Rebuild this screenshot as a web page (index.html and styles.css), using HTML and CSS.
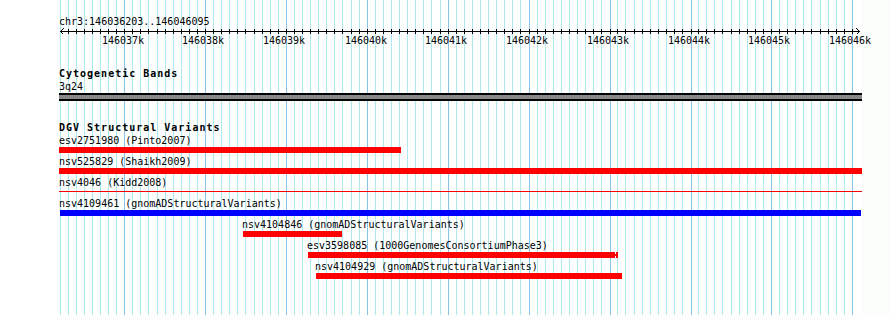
FILE: index.html
```html
<!DOCTYPE html>
<html lang="en">
<head>
<meta charset="utf-8">
<title>Genome view</title>
<link rel="stylesheet" href="styles.css">
</head>
<body>
<div class="view">
  <svg class="grid" width="890" height="315" viewBox="0 0 890 315" aria-hidden="true">
    <g class="grid-minor"><path id="gminor" d="M60.5 0V315M68.5 0V315M76.5 0V315M84.5 0V315M92.5 0V315M100.5 0V315M108.5 0V315M116.5 0V315M132.5 0V315M140.5 0V315M148.5 0V315M157.5 0V315M165.5 0V315M173.5 0V315M181.5 0V315M189.5 0V315M197.5 0V315M213.5 0V315M221.5 0V315M229.5 0V315M237.5 0V315M245.5 0V315M254.5 0V315M262.5 0V315M270.5 0V315M278.5 0V315M294.5 0V315M302.5 0V315M310.5 0V315M318.5 0V315M326.5 0V315M334.5 0V315M342.5 0V315M351.5 0V315M359.5 0V315M375.5 0V315M383.5 0V315M391.5 0V315M399.5 0V315M407.5 0V315M415.5 0V315M423.5 0V315M431.5 0V315M440.5 0V315M456.5 0V315M464.5 0V315M472.5 0V315M480.5 0V315M488.5 0V315M496.5 0V315M504.5 0V315M512.5 0V315M520.5 0V315M537.5 0V315M545.5 0V315M553.5 0V315M561.5 0V315M569.5 0V315M577.5 0V315M585.5 0V315M593.5 0V315M601.5 0V315M617.5 0V315M625.5 0V315M634.5 0V315M642.5 0V315M650.5 0V315M658.5 0V315M666.5 0V315M674.5 0V315M682.5 0V315M698.5 0V315M706.5 0V315M714.5 0V315M722.5 0V315M731.5 0V315M739.5 0V315M747.5 0V315M755.5 0V315M763.5 0V315M779.5 0V315M787.5 0V315M795.5 0V315M803.5 0V315M811.5 0V315M820.5 0V315M828.5 0V315M836.5 0V315M844.5 0V315"/></g>
    <g class="grid-major"><path id="gmajor" d="M124.5 0V315M205.5 0V315M286.5 0V315M367.5 0V315M448.5 0V315M529.5 0V315M610.5 0V315M691.5 0V315M771.5 0V315M852.5 0V315"/></g>
  </svg>

  <div class="tracks">
    <section class="track ruler">
      <div class="ruler-loc">chr3:146036203..146046095</div>
      <svg class="ruler-axis" width="890" height="7" viewBox="0 28 890 7" aria-hidden="true">
        <clipPath id="tickclip"><rect x="61" y="29" width="798" height="5"/></clipPath>
        <g class="ticks" clip-path="url(#tickclip)"><use href="#gminor"/><use href="#gmajor"/></g>
        <path class="axis" d="M60 31.5H860"/>
        <path class="arrow" d="M63.5 28.5L60.5 31.5L63.5 34.5M856.5 28.5L859.5 31.5L856.5 34.5"/>
      </svg>
      <div class="ruler-labels">
        <span class="tick-label" style="left:102px">146037k</span>
        <span class="tick-label" style="left:182px">146038k</span>
        <span class="tick-label" style="left:263px">146039k</span>
        <span class="tick-label" style="left:345px">146040k</span>
        <span class="tick-label" style="left:425px">146041k</span>
        <span class="tick-label" style="left:506px">146042k</span>
        <span class="tick-label" style="left:587px">146043k</span>
        <span class="tick-label" style="left:668px">146044k</span>
        <span class="tick-label" style="left:748px">146045k</span>
        <span class="tick-label" style="left:829px">146046k</span>
      </div>
    </section>

    <section class="track cyto">
      <h2 class="track-title">Cytogenetic Bands</h2>
      <div class="band-label">3q24</div>
      <div class="band"></div>
    </section>

    <section class="track dgv">
      <h2 class="track-title">DGV Structural Variants</h2>
      <div class="features">
        <div class="feature" style="margin-left:59px">
          <div class="feature-label">esv2751980 (Pinto2007)</div>
          <div class="bar red" style="width:342px"></div>
        </div>
        <div class="feature" style="margin-left:59px">
          <div class="feature-label">nsv525829 (Shaikh2009)</div>
          <div class="bar red" style="width:803px"></div>
        </div>
        <div class="feature" style="margin-left:59px">
          <div class="feature-label">nsv4046 (Kidd2008)</div>
          <div class="bar thin red" style="width:803px"></div>
        </div>
        <div class="feature" style="margin-left:59px">
          <div class="feature-label">nsv4109461 (gnomADStructuralVariants)</div>
          <div class="bar blue" style="width:801px;margin-left:1px"></div>
        </div>
        <div class="feature" style="margin-left:242px">
          <div class="feature-label">nsv4104846 (gnomADStructuralVariants)</div>
          <div class="bar red" style="width:99px;margin-left:1px"></div>
        </div>
        <div class="feature" style="margin-left:307px">
          <div class="feature-label">esv3598085 (1000GenomesConsortiumPhase3)</div>
          <div class="bar red end-mark" style="width:310px;margin-left:1px"></div>
        </div>
        <div class="feature" style="margin-left:315px">
          <div class="feature-label">nsv4104929 (gnomADStructuralVariants)</div>
          <div class="bar red" style="width:306px;margin-left:1px"></div>
        </div>
      </div>
    </section>
  </div>
</div>
</body>
</html>
```

FILE: styles.css
```css
html, body {
  margin: 0;
  padding: 0;
  background: #ffffff;
}

.view {
  position: relative;
  width: 890px;
  height: 315px;
  overflow: hidden;
  background: linear-gradient(to right, #ffffff 862px, #fbfefb 862px);
  font-family: "DejaVu Sans Mono", "Liberation Mono", monospace;
  font-size: 10px;
  line-height: 11px;
  color: #000000;
}

.grid {
  position: absolute;
  top: 0;
  left: 0;
  display: block;
}

.grid-minor {
  stroke: #ade9ef;
  stroke-width: 1;
  fill: none;
  shape-rendering: crispEdges;
}

.grid-major {
  stroke: #86c5e9;
  stroke-width: 1;
  fill: none;
  shape-rendering: crispEdges;
}

.tracks {
  position: relative;
  display: flex;
  flex-direction: column;
}

.track {
  display: flex;
  flex-direction: column;
}

/* ruler */
.ruler-loc {
  margin: 16px 0 0 59px;
  white-space: nowrap;
}

.ruler-axis {
  display: block;
  margin-top: 1px;
}

.ticks {
  stroke: #000000;
  stroke-width: 1;
  fill: none;
  shape-rendering: crispEdges;
}

.axis {
  stroke: #000000;
  stroke-width: 1;
  fill: none;
  shape-rendering: crispEdges;
}

.arrow {
  stroke: #000000;
  stroke-width: 1;
  fill: none;
  shape-rendering: crispEdges;
}

.ruler-labels {
  position: relative;
  height: 11px;
}

.tick-label {
  position: absolute;
  top: 0;
  white-space: nowrap;
}

/* track titles */
.track-title {
  margin: 0 0 0 59px;
  font-size: 10px;
  font-weight: bold;
  letter-spacing: 1px;
  line-height: 11px;
  white-space: nowrap;
}

.cyto {
  margin-top: 22px;
}

.band-label {
  margin: 2px 0 0 59px;
}

.band {
  margin: 1px 0 0 59px;
  width: 803px;
  height: 4px;
  background: #888888;
  border-top: 2px solid #000000;
  border-bottom: 2px solid #000000;
}

.dgv {
  margin-top: 21px;
}

.features {
  margin-top: 2px;
  display: flex;
  flex-direction: column;
}

.feature {
  display: flex;
  flex-direction: column;
  align-items: flex-start;
}

.feature-label {
  white-space: nowrap;
}

.bar {
  position: relative;
  height: 6px;
  margin-top: 1px;
  margin-bottom: 3px;
}

.bar.red {
  background: #ff0000;
}

.bar.blue {
  background: #0000ff;
}

.bar.thin {
  height: 1px;
  margin-top: 3px;
  margin-bottom: 6px;
}

.end-mark::after {
  content: "";
  position: absolute;
  top: 0;
  right: 2px;
  width: 1px;
  height: 6px;
  background: linear-gradient(to bottom, #ffffff 2px, transparent 2px, transparent 4px, #ffffff 4px);
}
```
